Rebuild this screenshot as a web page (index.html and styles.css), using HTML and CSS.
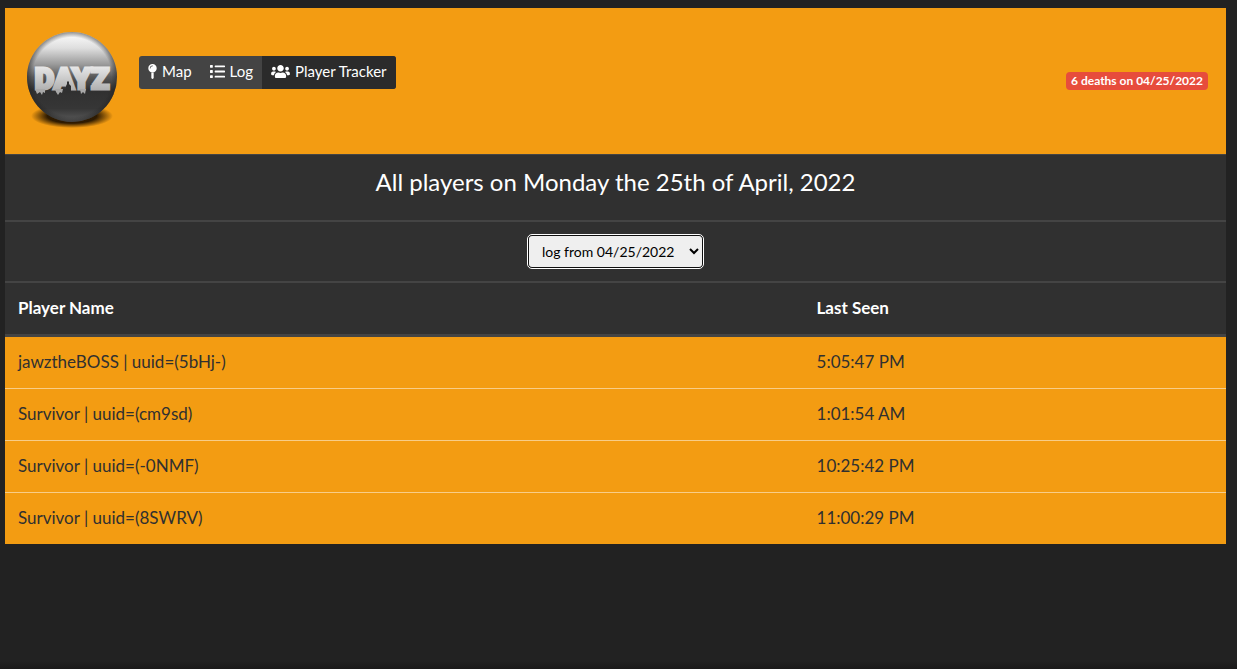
FILE: index.html
```html
<!DOCTYPE html>
<html lang="en">
<head>
<meta charset="utf-8">
<title>Player Tracker</title>
<link rel="stylesheet" href="styles.css">
</head>
<body>
<main class="page">
  <header class="topbar">
    <svg class="logo" viewBox="0 0 96 106" role="img" aria-label="DayZ">
      <defs>
        <linearGradient id="ball" x1="0" y1="0" x2="0" y2="1">
          <stop offset="0" stop-color="#ffffff"/>
          <stop offset=".18" stop-color="#dedede"/>
          <stop offset=".36" stop-color="#9a9a9a"/>
          <stop offset=".5" stop-color="#585858"/>
          <stop offset=".64" stop-color="#303030"/>
          <stop offset=".85" stop-color="#363636"/>
          <stop offset="1" stop-color="#5c5c5c"/>
        </linearGradient>
        <radialGradient id="rim">
          <stop offset=".88" stop-color="#222" stop-opacity="0"/>
          <stop offset="1" stop-color="#222" stop-opacity=".5"/>
        </radialGradient>
        <radialGradient id="shade">
          <stop offset=".6" stop-color="#241400" stop-opacity=".95"/>
          <stop offset="1" stop-color="#241400" stop-opacity="0"/>
        </radialGradient>
        <linearGradient id="letters" x1="0" y1="0" x2="0" y2="1">
          <stop offset="0" stop-color="#f4f4f4"/>
          <stop offset="1" stop-color="#a2a2a2"/>
        </linearGradient>
      </defs>
      <ellipse cx="49" cy="88" rx="41" ry="12" fill="url(#shade)"/>
      <circle cx="49" cy="49" r="45" fill="url(#ball)"/>
      <circle cx="49" cy="49" r="45" fill="url(#rim)"/>
      <text class="logo-text" x="49" y="61" text-anchor="middle" fill="url(#letters)" stroke="url(#letters)">DAYZ</text>
      <path d="M12 61h10v4l-2-1-1 3-2-3-3 2zM32 61h8l-1 4-2-1-2 3-2-3zM57 61h6l-1 5-2-2-2 2z" fill="#a8a8a8"/>
      <path d="M43 65v-7l1-2v-2l1-1 1 1v2l2 2v7z" fill="#303030"/>
    </svg>
    <nav class="tabs">
      <a class="tab" href="#map"><svg class="icon-pin" viewBox="0 0 288 512"><path fill="currentColor" d="M104 300v174l22 33c5 7 31 7 36 0l22-33V300zM144 0C64.47 0 0 64.47 0 144s64.47 144 144 144 144-64.47 144-144S223.53 0 144 0zm0 76c-37.5 0-68 30.5-68 68 0 6.62-5.38 12-12 12s-12-5.38-12-12c0-50.73 41.28-92 92-92 6.62 0 12 5.38 12 12s-5.38 12-12 12z"/></svg>Map</a>
      <a class="tab" href="#log"><svg class="icon" viewBox="0 0 512 512"><path fill="currentColor" d="M16 32h64q16 0 16 16v64q0 16-16 16H16q-16 0-16-16V48q0-16 16-16zm0 176h64q16 0 16 16v64q0 16-16 16H16q-16 0-16-16v-64q0-16 16-16zm0 176h64q16 0 16 16v64q0 16-16 16H16q-16 0-16-16v-64q0-16 16-16zM176 48h320q16 0 16 16v32q0 16-16 16H176q-16 0-16-16V64q0-16 16-16zm0 176h320q16 0 16 16v32q0 16-16 16H176q-16 0-16-16v-32q0-16 16-16zm0 176h320q16 0 16 16v32q0 16-16 16H176q-16 0-16-16v-32q0-16 16-16z"/></svg>Log</a>
      <a class="tab tab-active" href="#players" aria-current="page"><svg class="icon-users" viewBox="0 0 640 512"><path fill="currentColor" d="M96 224c35.3 0 64-28.7 64-64s-28.7-64-64-64-64 28.7-64 64 28.7 64 64 64zm448 0c35.3 0 64-28.7 64-64s-28.7-64-64-64-64 28.7-64 64 28.7 64 64 64zm32 32h-64c-17.6 0-33.5 7.1-45.1 18.6 40.3 22.1 68.9 62 75.1 109.4h66c17.7 0 32-14.3 32-32v-32c0-35.3-28.7-64-64-64zm-256 0c61.9 0 112-50.1 112-112S381.9 32 320 32 208 82.1 208 144s50.1 112 112 112zm76.8 32h-8.3c-20.8 10-43.9 16-68.5 16s-47.6-6-68.5-16h-8.3C179.6 288 128 339.6 128 403.2V432c0 26.5 21.5 48 48 48h288c26.5 0 48-21.5 48-48v-28.8c0-63.6-51.6-115.2-115.2-115.2zm-223.7-13.4C161.5 263.1 145.6 256 128 256H64c-35.3 0-64 28.7-64 64v32c0 17.7 14.3 32 32 32h65.9c6.3-47.4 34.9-87.3 75.2-109.4z"/></svg>Player Tracker</a>
    </nav>
    <span class="badge">6 deaths on 04/25/2022</span>
  </header>
  <h1 class="title">All players on Monday the 25th of April, 2022</h1>
  <div class="filter">
    <select class="log-select" aria-label="Log date" autofocus>
      <option>log from 04/25/2022</option>
    </select>
  </div>
  <table class="players">
    <thead>
      <tr><th class="col-name" scope="col">Player Name</th><th scope="col">Last Seen</th></tr>
    </thead>
    <tbody>
      <tr><td>jawztheBOSS | uuid=(5bHj-)</td><td>5:05:47 PM</td></tr>
      <tr><td>Survivor | uuid=(cm9sd)</td><td>1:01:54 AM</td></tr>
      <tr><td>Survivor | uuid=(-0NMF)</td><td>10:25:42 PM</td></tr>
      <tr><td>Survivor | uuid=(8SWRV)</td><td>11:00:29 PM</td></tr>
    </tbody>
  </table>
</main>
</body>
</html>
```
FILE: styles.css
```css
* { box-sizing: border-box; }
html { min-height: 100%; background: #222; }
body {
  min-height: 100vh;
  margin: 0;
  padding: 8px 11px 8px 5px;
  background: linear-gradient(to top, #1b1a1a, #222 8px);
  color: #fff;
  font: 17px/25px Lato, sans-serif;
}
.page { background: #303030; }
.topbar {
  display: flex;
  align-items: center;
  padding: 20px 18px;
  background: #f39c12;
}
.logo { width: 96px; height: 106px; margin-right: 20px; }
.logo-text {
  font: 900 30px Roboto, "Liberation Sans", sans-serif;
  stroke-width: 3px;
}
.tabs {
  display: flex;
  margin-bottom: 17px;
  border-radius: 3px;
  background: #444;
  overflow: hidden;
}
.tab {
  display: flex;
  align-items: center;
  gap: 5px;
  padding: 3px 9px 5px;
  color: #fff;
  font-size: 15px;
  text-decoration: none;
}
.tab-active { background: #2b2b2b; }
.icon-pin { width: 9px; height: 15px; }
.icon { width: 15px; height: 15px; }
.icon-users { width: 19px; height: 15px; }
.badge {
  margin-left: auto;
  padding: 2px 5px;
  border-radius: 4px;
  background: #e74c3c;
  font-size: 12px;
  font-weight: 700;
  line-height: 14px;
}
.title {
  margin: 0;
  padding: 12px 13px 23px;
  border-top: 1px solid #444;
  font-size: 24px;
  font-weight: 400;
  line-height: 30px;
  text-align: center;
}
.filter {
  display: flex;
  justify-content: center;
  padding: 14px 13px;
  border: solid #444;
  border-width: 2px 0;
}
.log-select {
  width: 173px;
  height: 31px;
  margin: 0;
  padding: 0 4px 1px 9px;
  border: 0;
  border-radius: 3px;
  outline: 1px solid #fff;
  outline-offset: 1px;
  box-shadow: 0 0 0 1px #101010;
  background: #efefef;
  color: #000;
  font: 14px Lato, sans-serif;
}
.players { width: 100%; border-collapse: separate; border-spacing: 0; }
.players th, .players td { padding: 12px 13px 14px; text-align: left; }
.col-name { width: 65.4%; }
.players th { border-bottom: 3px solid #444; }
.players td { background: #f39c12; color: #303030; }
.players tr + tr td { border-top: 1px solid #f8cd88; }
```
